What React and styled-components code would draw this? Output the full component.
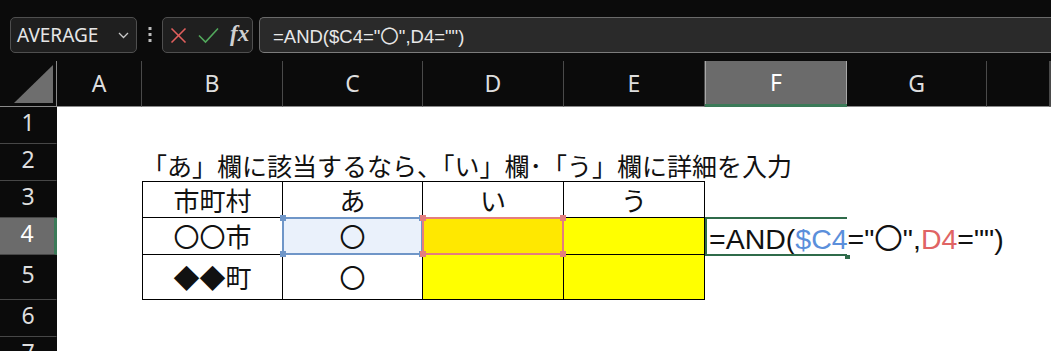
import React from "react";
import styled, { createGlobalStyle, css } from "styled-components";

const GlobalStyle = createGlobalStyle`
  html, body { margin: 0; padding: 0; background: #0b0b0b; }
  body { font-family: "Noto Sans", "Noto Sans CJK JP", sans-serif; }
  * { box-sizing: border-box; }
`;

const Page = styled.div`
  width: 1051px;
  height: 351px;
  overflow: hidden;
  display: flex;
  flex-direction: column;
  background: #0b0b0b;
`;

const Toolbar = styled.div`
  height: 61px;
  flex-shrink: 0;
  display: flex;
  align-items: flex-start;
  padding: 17px 0 0 10px;
`;

const NameBox = styled.div`
  width: 127px;
  height: 36px;
  border: 1px solid #4f4f4f;
  border-radius: 5px;
  background: #1f1f1f;
  display: flex;
  align-items: center;
  justify-content: space-between;
  padding: 0 7px 0 6px;
  color: #e6e6e6;
  font-size: 19px;
  font-family: "Noto Sans", sans-serif;
`;

const Dots = styled.div`
  width: 25px;
  height: 36px;
  display: flex;
  align-items: center;
  justify-content: center;
`;

const FxBox = styled.div`
  width: 91px;
  height: 36px;
  border: 1px solid #4f4f4f;
  border-radius: 5px;
  background: #1f1f1f;
  display: flex;
  align-items: center;
  gap: 11px;
  padding-left: 7px;
`;

const FxLabel = styled.span`
  font-family: "Liberation Serif", serif;
  font-style: italic;
  font-weight: 600;
  font-size: 23px;
  color: #d0d0d0;
  line-height: 1;
  margin-top: -3px;
`;

const FormulaBar = styled.div`
  flex: 1;
  margin-left: 6px;
  height: 36px;
  border: 1px solid #6a6a6a;
  border-right: none;
  border-bottom-color: #7c7c7c;
  border-radius: 5px 0 0 5px;
  background: #2a2a2a;
  display: flex;
  align-items: center;
  padding-left: 13px;
  color: #e8e8e8;
  font-size: 18.5px;
  font-family: "Liberation Sans", "Noto Sans CJK JP", sans-serif;
`;

const Sheet = styled.div`
  flex: 1;
  display: grid;
  grid-template-columns: 57px 85px 141px 140px 141px 141px 142px 140px 1fr;
  grid-template-rows: 46px 37px 37px 37px 37px 45px 37px 37px;
  background: #ffffff;
`;

const Corner = styled.div`
  grid-column: 1;
  grid-row: 1;
  background: #0b0b0b;
  border-right: 1px solid #8a8a8a;
  border-bottom: 1px solid #8a8a8a;
  display: flex;
  align-items: flex-start;
`;

const ColHeader = styled.div`
  grid-row: 1;
  grid-column: ${(p) => p.$col};
  background: #0b0b0b;
  border-bottom: 1px solid #8a8a8a;
  border-right: 1px solid #4a4a4a;
  display: flex;
  align-items: center;
  justify-content: center;
  color: #dedede;
  font-size: 23px;
  font-family: "Noto Sans", sans-serif;
  padding-bottom: 2px;
  ${(p) =>
    p.$active &&
    css`
      background: #6b6b6b;
      color: #ffffff;
      border-right: none;
      border-bottom: 3px solid #3b7a58;
      box-shadow: inset 1px 0 0 #a8a8a8, inset -1px 0 0 #a8a8a8;
    `}
`;

const RowHeader = styled.div`
  grid-column: 1;
  grid-row: ${(p) => p.$row};
  background: #0b0b0b;
  border-bottom: 1px solid #474747;
  border-right: 1px solid #0b0b0b;
  display: flex;
  align-items: center;
  justify-content: center;
  color: #dedede;
  font-size: 23px;
  font-family: "Noto Sans", sans-serif;
  padding-bottom: 6px;
  ${(p) =>
    p.$active &&
    css`
      background: #6b6b6b;
      color: #ffffff;
      border-right: 3px solid #3b7a58;
    `}
`;

const Title = styled.div`
  grid-column: 3;
  grid-row: 3;
  z-index: 2;
  white-space: nowrap;
  display: flex;
  align-items: center;
  padding: 4px 0 0 0;
  font-size: 25px;
  color: #111;
  font-family: "Noto Sans CJK JP", sans-serif;
`;

const Cell = styled.div`
  position: relative;
  grid-column: ${(p) => p.$col};
  grid-row: ${(p) => p.$row};
  background: ${(p) => p.$bg || "transparent"};
  border-right: 1px solid #000;
  border-bottom: 1px solid #000;
  ${(p) => p.$top && "border-top: 1px solid #000;"}
  ${(p) => p.$left && "border-left: 1px solid #000;"}
  display: flex;
  align-items: center;
  justify-content: center;
  font-size: 26px;
  color: #111;
  font-family: "Noto Sans CJK JP", sans-serif;
  line-height: 1;
`;

const CellText = styled.span`
  position: relative;
  z-index: 2;
`;

const Selection = styled.div`
  position: absolute;
  top: -1px;
  left: -1px;
  right: -1px;
  bottom: -1px;
  border: 2px solid ${(p) => p.$color};
  background: ${(p) => p.$fill};
  z-index: 1;
`;

const Handle = styled.div`
  position: absolute;
  width: 6px;
  height: 6px;
  background: ${(p) => p.$color};
  ${(p) => (p.$v === "t" ? "top: -4px;" : "bottom: -4px;")}
  ${(p) => (p.$h === "l" ? "left: -4px;" : "right: -4px;")}
`;

const EditCell = styled.div`
  position: relative;
  grid-column: 7;
  grid-row: 5;
  z-index: 3;
  white-space: nowrap;
  display: flex;
  align-items: center;
  padding-left: 4px;
  font-size: 28.5px;
  color: #111;
  font-family: "Liberation Sans", "Noto Sans CJK JP", sans-serif;
`;

const EditFrame = styled.div`
  position: absolute;
  top: -1px;
  left: 0;
  right: 0;
  bottom: -1px;
  border: 2px solid #2f6b4a;
  border-right: none;
`;

const FillHandle = styled.div`
  position: absolute;
  right: -3px;
  bottom: -4px;
  width: 5px;
  height: 4px;
  background: #2f6b4a;
`;

const Ref = styled.span`
  color: ${(p) => p.$color};
`;

const COLS = ["A", "B", "C", "D", "E", "F", "G", "", ""];
const ROWS = [1, 2, 3, 4, 5, 6, 7];

function SelectionBox({ color, fill }) {
  return (
    <Selection $color={color} $fill={fill}>
      <Handle $color={color} $v="t" $h="l" />
      <Handle $color={color} $v="t" $h="r" />
      <Handle $color={color} $v="b" $h="l" />
      <Handle $color={color} $v="b" $h="r" />
    </Selection>
  );
}

export default function App() {
  const table = [
    { c: 3, r: 4, t: "市町村", top: true, left: true },
    { c: 4, r: 4, t: "あ", top: true },
    { c: 5, r: 4, t: "い", top: true },
    { c: 6, r: 4, t: "う", top: true },
    { c: 3, r: 5, t: "〇〇市", left: true },
    { c: 4, r: 5, t: "〇", bg: "#eaf1fb", sel: "blue" },
    { c: 5, r: 5, t: "", bg: "#ffe800", sel: "red" },
    { c: 6, r: 5, t: "", bg: "#ffff00" },
    { c: 3, r: 6, t: "◆◆町", left: true },
    { c: 4, r: 6, t: "〇" },
    { c: 5, r: 6, t: "", bg: "#ffff00" },
    { c: 6, r: 6, t: "", bg: "#ffff00" },
  ];

  return (
    <>
      <GlobalStyle />
      <Page>
        <Toolbar>
          <NameBox>
            <span>AVERAGE</span>
            <svg width="11" height="7" viewBox="0 0 11 7">
              <polyline points="1,1 5.5,5.5 10,1" fill="none" stroke="#c8c8c8" strokeWidth="1.3" />
            </svg>
          </NameBox>
          <Dots>
            <svg width="4" height="16" viewBox="0 0 4 16">
              <rect x="0.5" y="0" width="3" height="3" fill="#bdbdbd" />
              <rect x="0.5" y="6" width="3" height="3" fill="#bdbdbd" />
              <rect x="0.5" y="12" width="3" height="3" fill="#bdbdbd" />
            </svg>
          </Dots>
          <FxBox>
            <svg width="17" height="17" viewBox="0 0 17 17">
              <line x1="1.5" y1="1.5" x2="15.5" y2="15.5" stroke="#e05f5d" strokeWidth="1.6" />
              <line x1="15.5" y1="1.5" x2="1.5" y2="15.5" stroke="#e05f5d" strokeWidth="1.6" />
            </svg>
            <svg width="21" height="17" viewBox="0 0 21 17">
              <polyline points="1,8.5 7.5,15 20,1.5" fill="none" stroke="#52a85c" strokeWidth="1.6" />
            </svg>
            <FxLabel>fx</FxLabel>
          </FxBox>
          <FormulaBar>=AND($C4="〇",D4="")</FormulaBar>
        </Toolbar>
        <Sheet>
          <Corner>
            <svg width="56" height="45" viewBox="0 0 56 45">
              <polygon points="14,42 53,42 53,4" fill="#6e6e6e" />
            </svg>
          </Corner>
          {COLS.map((c, i) => (
            <ColHeader key={i} $col={i + 2} $active={c === "F"}>
              {c}
            </ColHeader>
          ))}
          {ROWS.map((r) => (
            <RowHeader key={r} $row={r + 1} $active={r === 4}>
              {r}
            </RowHeader>
          ))}
          <Title>「あ」欄に該当するなら、「い」欄･「う」欄に詳細を入力</Title>
          {table.map((cell, i) => (
            <Cell
              key={i}
              $col={cell.c}
              $row={cell.r}
              $bg={cell.bg}
              $top={cell.top}
              $left={cell.left}
            >
              {cell.sel === "blue" && <SelectionBox color="#6f96c8" fill="#eaf1fb" />}
              {cell.sel === "red" && <SelectionBox color="#e47e7e" fill="#ffe800" />}
              <CellText>{cell.t}</CellText>
            </Cell>
          ))}
          <EditCell>
            <EditFrame />
            <FillHandle />
            <span>
              =AND(<Ref $color="#5b8fdb">$C4</Ref>="〇",<Ref $color="#e06464">D4</Ref>="")
            </span>
          </EditCell>
        </Sheet>
      </Page>
    </>
  );
}
